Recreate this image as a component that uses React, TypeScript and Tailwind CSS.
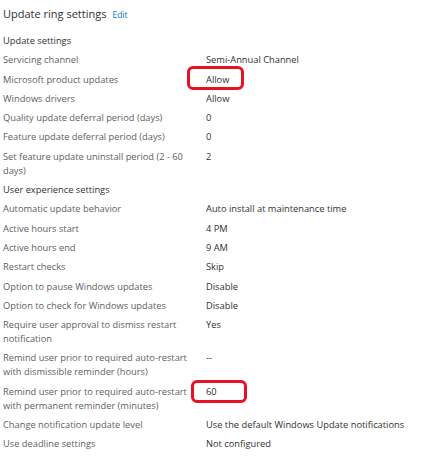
import React from "react";

type Row = { label: string; value: string; box?: 1 | 2; header?: boolean };

const rows: Row[] = [
  { label: "Update settings", value: "", header: true },
  { label: "Servicing channel", value: "Semi-Annual Channel" },
  { label: "Microsoft product updates", value: "Allow", box: 1 },
  { label: "Windows drivers", value: "Allow" },
  { label: "Quality update deferral period (days)", value: "0" },
  { label: "Feature update deferral period (days)", value: "0" },
  { label: "Set feature update uninstall period (2 - 60 days)", value: "2" },
  { label: "User experience settings", value: "", header: true },
  { label: "Automatic update behavior", value: "Auto install at maintenance time" },
  { label: "Active hours start", value: "4 PM" },
  { label: "Active hours end", value: "9 AM" },
  { label: "Restart checks", value: "Skip" },
  { label: "Option to pause Windows updates", value: "Disable" },
  { label: "Option to check for Windows updates", value: "Disable" },
  { label: "Require user approval to dismiss restart notification", value: "Yes" },
  { label: "Remind user prior to required auto-restart with dismissible reminder (hours)", value: "--" },
  { label: "Remind user prior to required auto-restart with permanent reminder (minutes)", value: "60", box: 2 },
  { label: "Change notification update level", value: "Use the default Windows Update notifications" },
  { label: "Use deadline settings", value: "Not configured" },
];

export default function App() {
  return (
    <div
      className="w-[431px] h-[462px] bg-white overflow-hidden pl-[3px] pt-[4px]"
      style={{ fontFamily: '"Segoe UI", "Open Sans", sans-serif' }}
    >
      <div className="flex items-baseline gap-[6px] h-[20px]">
        <span className="text-[11px] leading-[20px] text-[#323130]">Update ring settings</span>
        <span className="text-[8.5px] leading-[20px] text-[#0078d4]">Edit</span>
      </div>
      <div className="flex flex-col gap-[5.3px] mt-[10px] text-[9.3px] leading-[14px]">
        {rows.map((r, i) =>
          r.header ? (
            <div key={i} className="text-[#323130]">
              {r.label}
            </div>
          ) : (
            <div key={i} className="grid grid-cols-[203px_1fr]">
              <div className="text-[#5f5e5c] pr-[12px]">{r.label}</div>
              <div className="text-[#323130] relative">
                {r.value}
                {r.box === 1 && (
                  <span className="absolute left-[-19px] top-[-7px] w-[57px] h-[24px] border-[3px] border-[#e81123] rounded-[6px]" />
                )}
                {r.box === 2 && (
                  <span className="absolute left-[-15px] top-[-5px] w-[56px] h-[23px] border-[3px] border-[#e81123] rounded-[6px]" />
                )}
              </div>
            </div>
          )
        )}
      </div>
    </div>
  );
}
